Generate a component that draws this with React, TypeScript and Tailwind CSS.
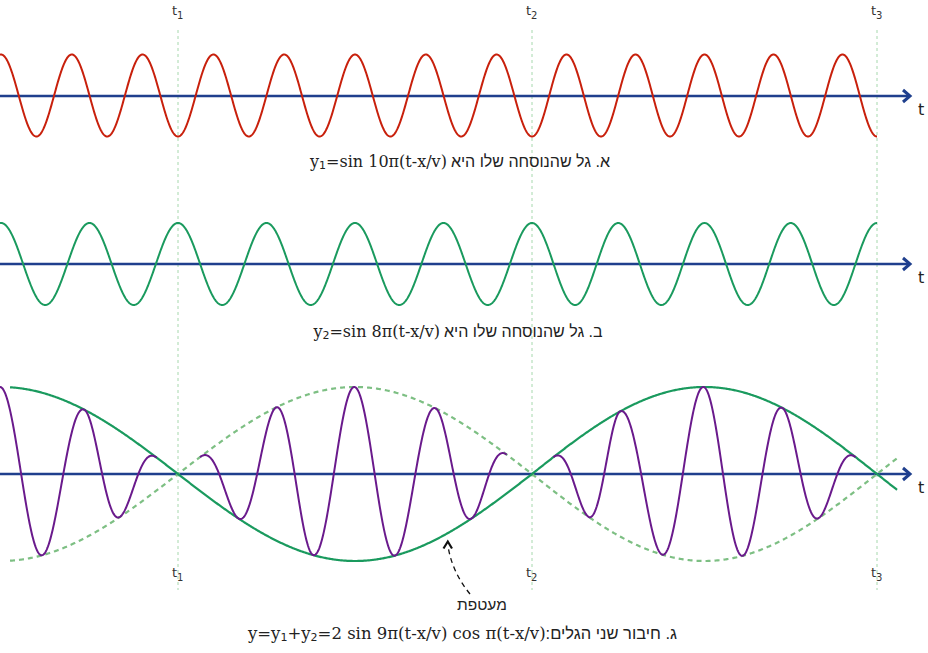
import React from "react";

const T1 = 178;
const T2 = 532;
const T3 = 877;
const A = 87;

const u = (x: number) => (x <= T2 ? (x - T1) / (T2 - T1) : 1 + (x - T2) / (T3 - T2));

function buildPath(x0: number, x1: number, f: (x: number) => number, step = 1) {
  let d = "";
  let first = true;
  for (let x = x0; x < x1; x += step) {
    d += (first ? "M" : "L") + x.toFixed(2) + " " + f(x).toFixed(2) + " ";
    first = false;
  }
  d += "L" + x1.toFixed(2) + " " + f(x1).toFixed(2);
  return d;
}

const red = (x: number) => 95.5 + 41 * Math.cos(10 * Math.PI * u(x));
const green = (x: number) => 264 - 41 * Math.cos(8 * Math.PI * u(x));
const envSolid = (x: number) => 474 + A * Math.sin(Math.PI * u(x));
const envDash = (x: number) => 474 - A * Math.sin(Math.PI * u(x));

// extrema: [x, +1 = bottom, -1 = top]
const segments: [number, number][][] = [
  [
    [0, -1],
    [42.3, 1],
    [84.3, -1],
    [120, 1],
    [156.7, -1],
  ],
  [
    [200, -1],
    [238.3, 1],
    [276, -1],
    [313.3, 1],
    [354.3, -1],
    [395, 1],
    [435.7, -1],
    [471.7, 1],
    [506.7, -1],
  ],
  [
    [553.3, -1],
    [588.3, 1],
    [620, -1],
    [662.3, 1],
    [703.3, -1],
    [742.7, 1],
    [782.3, -1],
    [819, 1],
    [855.7, -1],
  ],
];

function purplePath(seg: [number, number][]) {
  const f = (x: number) => {
    let i = 0;
    while (i < seg.length - 2 && x > seg[i + 1][0]) i++;
    const [a, va] = seg[i];
    const [b] = seg[i + 1];
    const w = va * Math.cos((Math.PI * (x - a)) / (b - a));
    return 474 + A * Math.abs(Math.sin(Math.PI * u(x))) * w;
  };
  return buildPath(seg[0][0], seg[seg.length - 1][0], f, 0.5);
}

const BLUE = "#1f3f8d";

function Axis({ y }: { y: number }) {
  return (
    <g>
      <line x1={0} y1={y} x2={908} y2={y} stroke={BLUE} strokeWidth={2.6} />
      <polyline
        points={`903,${y - 6} 910,${y} 903,${y + 6}`}
        fill="none"
        stroke={BLUE}
        strokeWidth={3}
        strokeLinejoin="miter"
        strokeLinecap="butt"
      />
      <text
        x={918}
        y={y + 18.5}
        fontFamily="'DejaVu Sans', sans-serif"
        fontSize={16}
        fill="#222"
      >
        t
      </text>
    </g>
  );
}

function TLabel({ x, y, n }: { x: number; y: number; n: number }) {
  return (
    <text x={x - 6} y={y} fontFamily="'DejaVu Sans', sans-serif" fontSize={13} fill="#333">
      t
      <tspan fontSize={10} dy={4}>
        {n}
      </tspan>
    </text>
  );
}

function Caption({
  heb,
  children,
  className,
  textClass,
}: {
  heb: string;
  children: React.ReactNode;
  className: string;
  textClass: string;
}) {
  return (
    <div className={"flex items-center justify-center " + className}>
      <div dir="rtl" className={"flex items-baseline whitespace-nowrap text-[#222] " + textClass}>
        <span className="font-['Liberation_Sans',sans-serif]">{heb}</span>
        <span dir="ltr" className="font-['DejaVu_Serif',serif]">
          {children}
        </span>
      </div>
    </div>
  );
}

function Sub({ c }: { c: string }) {
  return (
    <sub className="font-['DejaVu_Sans',sans-serif] text-[11px] relative top-[2px]">{c}</sub>
  );
}

export default function App() {
  const redD = buildPath(0, T3, red, 0.5);
  const greenD = buildPath(0, T3, green, 0.5);
  const solidD = buildPath(10, 897, envSolid);
  const dashD = buildPath(10, 898, envDash);

  return (
    <div className="relative w-[928px] h-[653px] bg-white overflow-hidden">
      <svg className="absolute left-0 top-0" width={928} height={653} viewBox="0 0 928 653">
        {[T1, T2, T3].map((x) => (
          <line
            key={x}
            x1={x}
            y1={30}
            x2={x}
            y2={590}
            stroke="#a6d8ad"
            strokeWidth={1}
            strokeDasharray="3 3"
          />
        ))}
      </svg>
      <div className="relative flex flex-col">
        <svg width={928} height={140} viewBox="0 0 928 140" className="block">
          <TLabel x={T1} y={15} n={1} />
          <TLabel x={T2} y={15} n={2} />
          <TLabel x={T3} y={15} n={3} />
          <Axis y={96} />
          <path d={redD} fill="none" stroke="#c8200c" strokeWidth={2} />
        </svg>
        <Caption
          heb="א. גל שהנוסחה שלו היא"
          className="h-[44px] pr-[8px]"
          textClass="text-[16px] gap-[4px]"
        >
          y<Sub c="1" />=sin 10π(t-x/v)
        </Caption>
        <svg width={928} height={126} viewBox="0 184 928 126" className="block">
          <Axis y={264} />
          <path d={greenD} fill="none" stroke="#1a9a5e" strokeWidth={2} />
        </svg>
        <Caption
          heb="ב. גל שהנוסחה שלו היא"
          className="h-[44px] pr-[12px]"
          textClass="text-[16px] gap-[4px]"
        >
          y<Sub c="2" />=sin 8π(t-x/v)
        </Caption>
        <svg width={928} height={264} viewBox="0 354 928 264" className="block">
          <Axis y={474} />
          <path
            d={dashD}
            fill="none"
            stroke="#7dbf83"
            strokeWidth={2.2}
            strokeDasharray="5 4"
          />
          <path d={solidD} fill="none" stroke="#1a9a5e" strokeWidth={2.2} />
          {segments.map((s, i) => (
            <path key={i} d={purplePath(s)} fill="none" stroke="#6a1a8c" strokeWidth={2} />
          ))}
          <TLabel x={T1} y={577} n={1} />
          <TLabel x={T2} y={577} n={2} />
          <TLabel x={T3} y={577} n={3} />
          <path
            d="M470,594 Q452,572 448,546"
            fill="none"
            stroke="#111"
            strokeWidth={1.3}
            strokeDasharray="5 4"
          />
          <polyline
            points="443.5,548.5 447.8,541.5 452,548.5"
            fill="none"
            stroke="#111"
            strokeWidth={2.2}
          />
          <text
            x={482}
            y={610}
            textAnchor="middle"
            fontFamily="'Liberation Sans', sans-serif"
            fontSize={15.5}
            fill="#222"
          >
            מעטפת
          </text>
        </svg>
        <Caption
          heb="ג. חיבור שני הגלים:"
          className="h-[32px] pr-[3px]"
          textClass="text-[16.5px]"
        >
          y=y<Sub c="1" />+y<Sub c="2" />=2 sin 9π(t-x/v) cos π(t-x/v)
        </Caption>
      </div>
    </div>
  );
}
